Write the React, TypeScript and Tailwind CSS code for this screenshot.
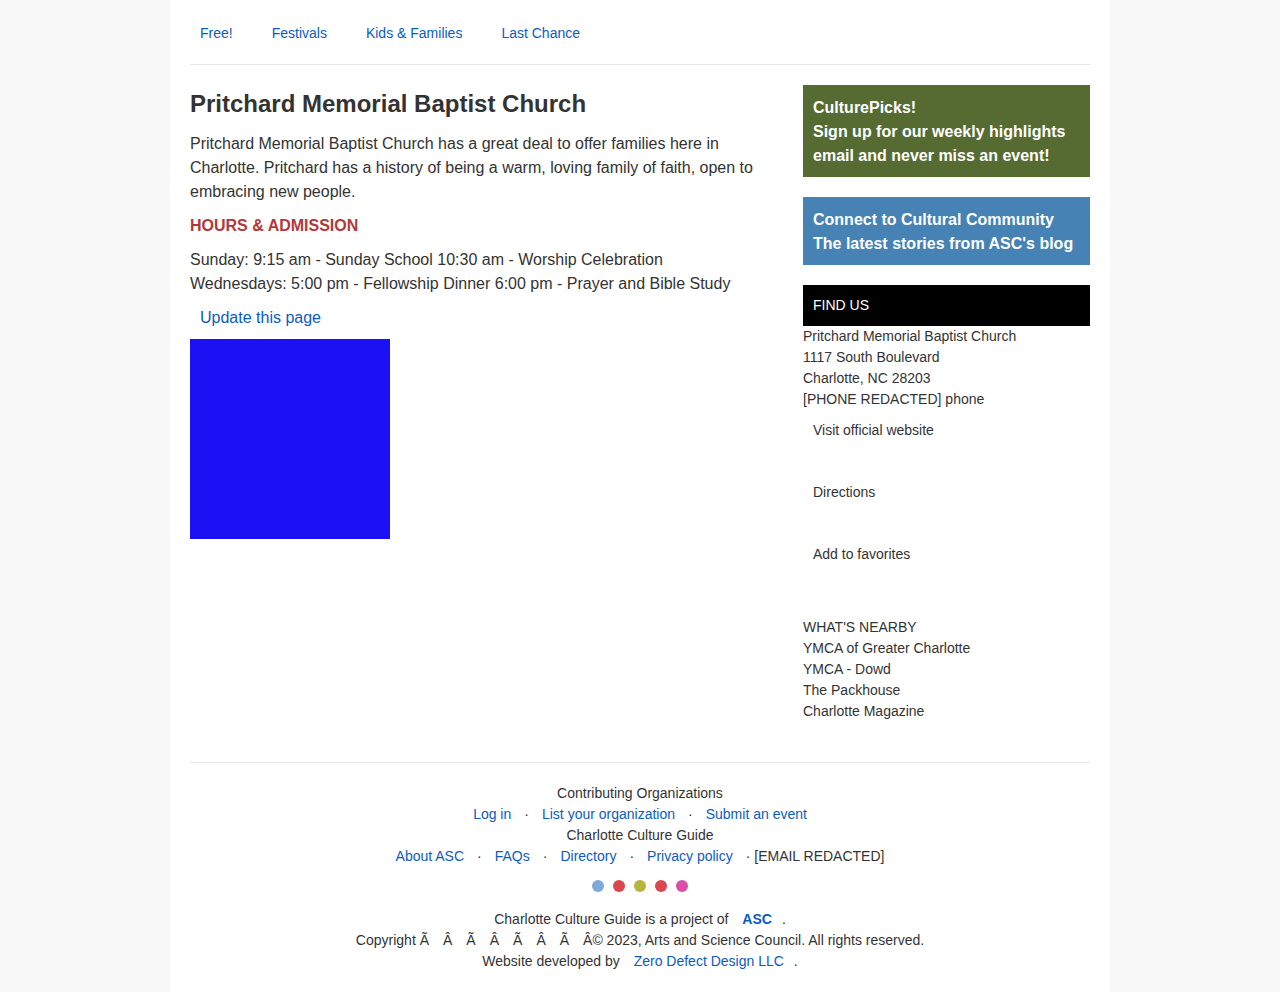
import React from "react";

const link = "text-[#0b5cbf]";

export default function App() {
  const garbled = ["Ã", "Â", "Ã", "Â", "Ã", "Â", "Ã"];
  return (
    <div className="min-h-[992px] bg-[#f8f8f8] text-[#333] [font-family:'Liberation_Sans',Arial,sans-serif]">
      <div className="mx-auto w-[940px] bg-white px-5 min-h-[992px] pb-5">
        <nav className="flex h-[65px] items-center gap-[39px] border-b border-[#e5e5e5] pl-[10px] pt-[2px] text-[14px]">
          <a className={link}>Free!</a>
          <a className={link}>Festivals</a>
          <a className={link}>Kids &amp; Families</a>
          <a className={link}>Last Chance</a>
        </nav>

        <div className="flex justify-between pt-5">
          <div className="w-[580px]">
            <h1 className="text-[24px] font-bold leading-[38px]">Pritchard Memorial Baptist Church</h1>
            <p className="mt-[9px] text-[16px] leading-[24px]">
              Pritchard Memorial Baptist Church has a great deal to offer families here in Charlotte. Pritchard has a history of being a warm, loving family of faith, open to embracing new people.
            </p>
            <h2 className="mt-[10px] text-[16px] font-bold leading-[24px] text-[#b3383a]">HOURS &amp; ADMISSION</h2>
            <div className="mt-[10px] text-[16px] leading-[24px]">
              <div>Sunday: 9:15 am - Sunday School 10:30 am - Worship Celebration</div>
              <div>Wednesdays: 5:00 pm - Fellowship Dinner 6:00 pm - Prayer and Bible Study</div>
            </div>
            <a className={`mt-[10px] block pl-[10px] text-[16px] leading-[24px] ${link}`}>Update this page</a>
            <div className="mt-[9px] h-[200px] w-[200px] bg-[#1c10f5]" />
          </div>

          <div className="w-[287px]">
            <div className="bg-[#566b31] px-[10px] pt-[11px] pb-[9px] text-[16px] font-bold leading-[24px] text-white">
              <div>CulturePicks!</div>
              <div>Sign up for our weekly highlights email and never miss an event!</div>
            </div>
            <div className="mt-5 bg-[#4682b4] px-[10px] pt-[11px] pb-[9px] text-[16px] font-bold leading-[24px] text-white">
              <div>Connect to Cultural Community</div>
              <div>The latest stories from ASC's blog</div>
            </div>
            <div className="mt-5 flex h-[41px] items-center bg-black px-[10px] text-[14px] text-white">FIND US</div>
            <div className="text-[14px] leading-[21px]">
              <div>Pritchard Memorial Baptist Church</div>
              <div>1117 South Boulevard</div>
              <div>Charlotte, NC 28203</div>
              <div>[PHONE REDACTED] phone</div>
            </div>
            <div className="mt-[10px] flex flex-col gap-[41px] pl-[10px] text-[14px] leading-[21px]">
              <div>Visit official website</div>
              <div>Directions</div>
              <div>Add to favorites</div>
            </div>
            <div className="mt-[52px] text-[14px] leading-[21px]">
              <div>WHAT'S NEARBY</div>
              <div>YMCA of Greater Charlotte</div>
              <div>YMCA - Dowd</div>
              <div>The Packhouse</div>
              <div>Charlotte Magazine</div>
            </div>
          </div>
        </div>

        <footer className="mt-[40px] border-t border-[#e5e5e5] pt-[20px] text-center text-[14px] leading-[21px]">
          <div>Contributing Organizations</div>
          <div className="flex justify-center gap-[13px]">
            <a className={link}>Log in</a><span>·</span>
            <a className={link}>List your organization</a><span>·</span>
            <a className={link}>Submit an event</a>
          </div>
          <div>Charlotte Culture Guide</div>
          <div className="flex justify-center gap-[13px]">
            <a className={link}>About ASC</a><span>·</span>
            <a className={link}>FAQs</a><span>·</span>
            <a className={link}>Directory</a><span>·</span>
            <a className={link}>Privacy policy</a>
            <span>· [EMAIL REDACTED]</span>
          </div>
          <div className="mt-[13px] flex justify-center gap-[9px]">
            <span className="h-[12px] w-[12px] rounded-full bg-[#7fa9d9]" />
            <span className="h-[12px] w-[12px] rounded-full bg-[#d9474f]" />
            <span className="h-[12px] w-[12px] rounded-full bg-[#b5b53d]" />
            <span className="h-[12px] w-[12px] rounded-full bg-[#d9474f]" />
            <span className="h-[12px] w-[12px] rounded-full bg-[#d94fa8]" />
          </div>
          <div className="mt-[17px]">
            Charlotte Culture Guide is a project of <a className={`mx-[10px] font-bold ${link}`}>ASC</a>.
          </div>
          <div>
            Copyright{" "}
            {garbled.map((c, i) => (
              <span key={i} className="mr-[14px] inline-block">{c}</span>
            ))}
            Â© 2023, Arts and Science Council. All rights reserved.
          </div>
          <div>
            Website developed by <a className={`mx-[10px] ${link}`}>Zero Defect Design LLC</a>.
          </div>
        </footer>
      </div>
    </div>
  );
}
